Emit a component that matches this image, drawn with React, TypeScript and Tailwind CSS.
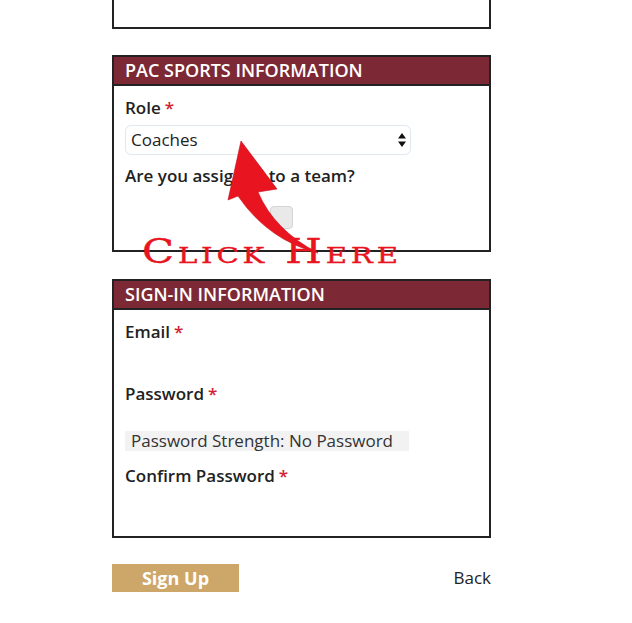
import React from 'react';

const Req = () => <span className="ml-1 text-[#d3212f]">*</span>;

const SectionHeader = ({ title }: { title: string }) => (
  <div className="h-[29px] border-t-2 border-x-2 border-[#222] bg-[#7c2935] pl-[11px] text-[18px] font-semibold leading-[27px] text-white">
    {title}
  </div>
);

export default function App() {
  return (
    <div
      className="relative h-[623px] w-[632px] overflow-hidden bg-white text-[#222]"
      style={{ fontFamily: '"Open Sans", "Noto Sans", sans-serif' }}
    >
      <div className="ml-[112px] w-[379px]">
        {/* tail of the previous section */}
        <div className="h-[29px] border-x-2 border-b-2 border-[#222]" />

        {/* PAC sports */}
        <div className="mt-[26px]">
          <SectionHeader title="PAC SPORTS INFORMATION" />
          <div className="h-[168px] border-2 border-[#222] px-[11px] pt-[11px]">
            <div className="text-[17px] font-semibold leading-[22px]">
              Role
              <Req />
            </div>
            <div className="mt-[6px] flex h-[30px] w-[286px] items-center justify-between rounded-[6px] border border-[#dfe7ef] bg-white pl-[5px] pr-[4px] text-[17px]">
              <span>Coaches</span>
              <svg width="8" height="14" viewBox="0 0 8 14">
                <path d="M4,0 L8,5.5 L0,5.5 Z M4,14 L8,8.5 L0,8.5 Z" fill="#111" />
              </svg>
            </div>
            <div className="mt-[9px] text-[17px] font-semibold leading-[24px]">
              Are you assigned to a team?
            </div>
            <div className="ml-[145px] mt-[18px] h-[23px] w-[23px] rounded-[4px] border border-[#d4d4d4] bg-[#e9e9e9]" />
          </div>
        </div>

        {/* Sign-in */}
        <div className="mt-[27px]">
          <SectionHeader title="SIGN-IN INFORMATION" />
          <div className="h-[230px] border-2 border-[#222] px-[11px] pt-[11px]">
            <div className="text-[17px] font-semibold leading-[22px]">
              Email
              <Req />
            </div>
            <div className="mt-[40px] text-[17px] font-semibold leading-[22px]">
              Password
              <Req />
            </div>
            <div className="mt-[26px] h-[20px] w-[284px] bg-[#f2f2f2] pl-[6px] text-[17px] leading-[20px] text-[#333]">
              Password Strength: No Password
            </div>
            <div className="mt-[14px] text-[17px] font-semibold leading-[22px]">
              Confirm Password
              <Req />
            </div>
          </div>
        </div>

        <div className="mt-[26px] flex items-center justify-between">
          <button className="h-[28px] w-[127px] bg-[#cca769] text-[18px] font-bold leading-[28px] text-white">
            Sign Up
          </button>
          <span className="text-[17px] text-[#222]">Back</span>
        </div>
      </div>

      {/* annotation overlay */}
      <svg
        className="pointer-events-none absolute left-0 top-0"
        width="632"
        height="623"
        viewBox="0 0 632 623"
      >
        <path
          d="M241,141 L277,189 L258,192 Q274,230 318,253 Q268,240 238,196 L228,200 Z"
          fill="#e8141f"
          stroke="#c40f1a"
          strokeWidth="0.6"
        />
      </svg>
      <div
        className="pointer-events-none absolute left-[142px] top-[232px] origin-left scale-x-[1.27] text-[33px] leading-[40px] tracking-[3px] text-[#e8141f]"
        style={{
          fontFamily: '"DejaVu Serif", serif',
          fontVariant: 'small-caps',
          WebkitTextStroke: '0.4px #e8141f',
        }}
      >
        Click Here
      </div>
    </div>
  );
}
